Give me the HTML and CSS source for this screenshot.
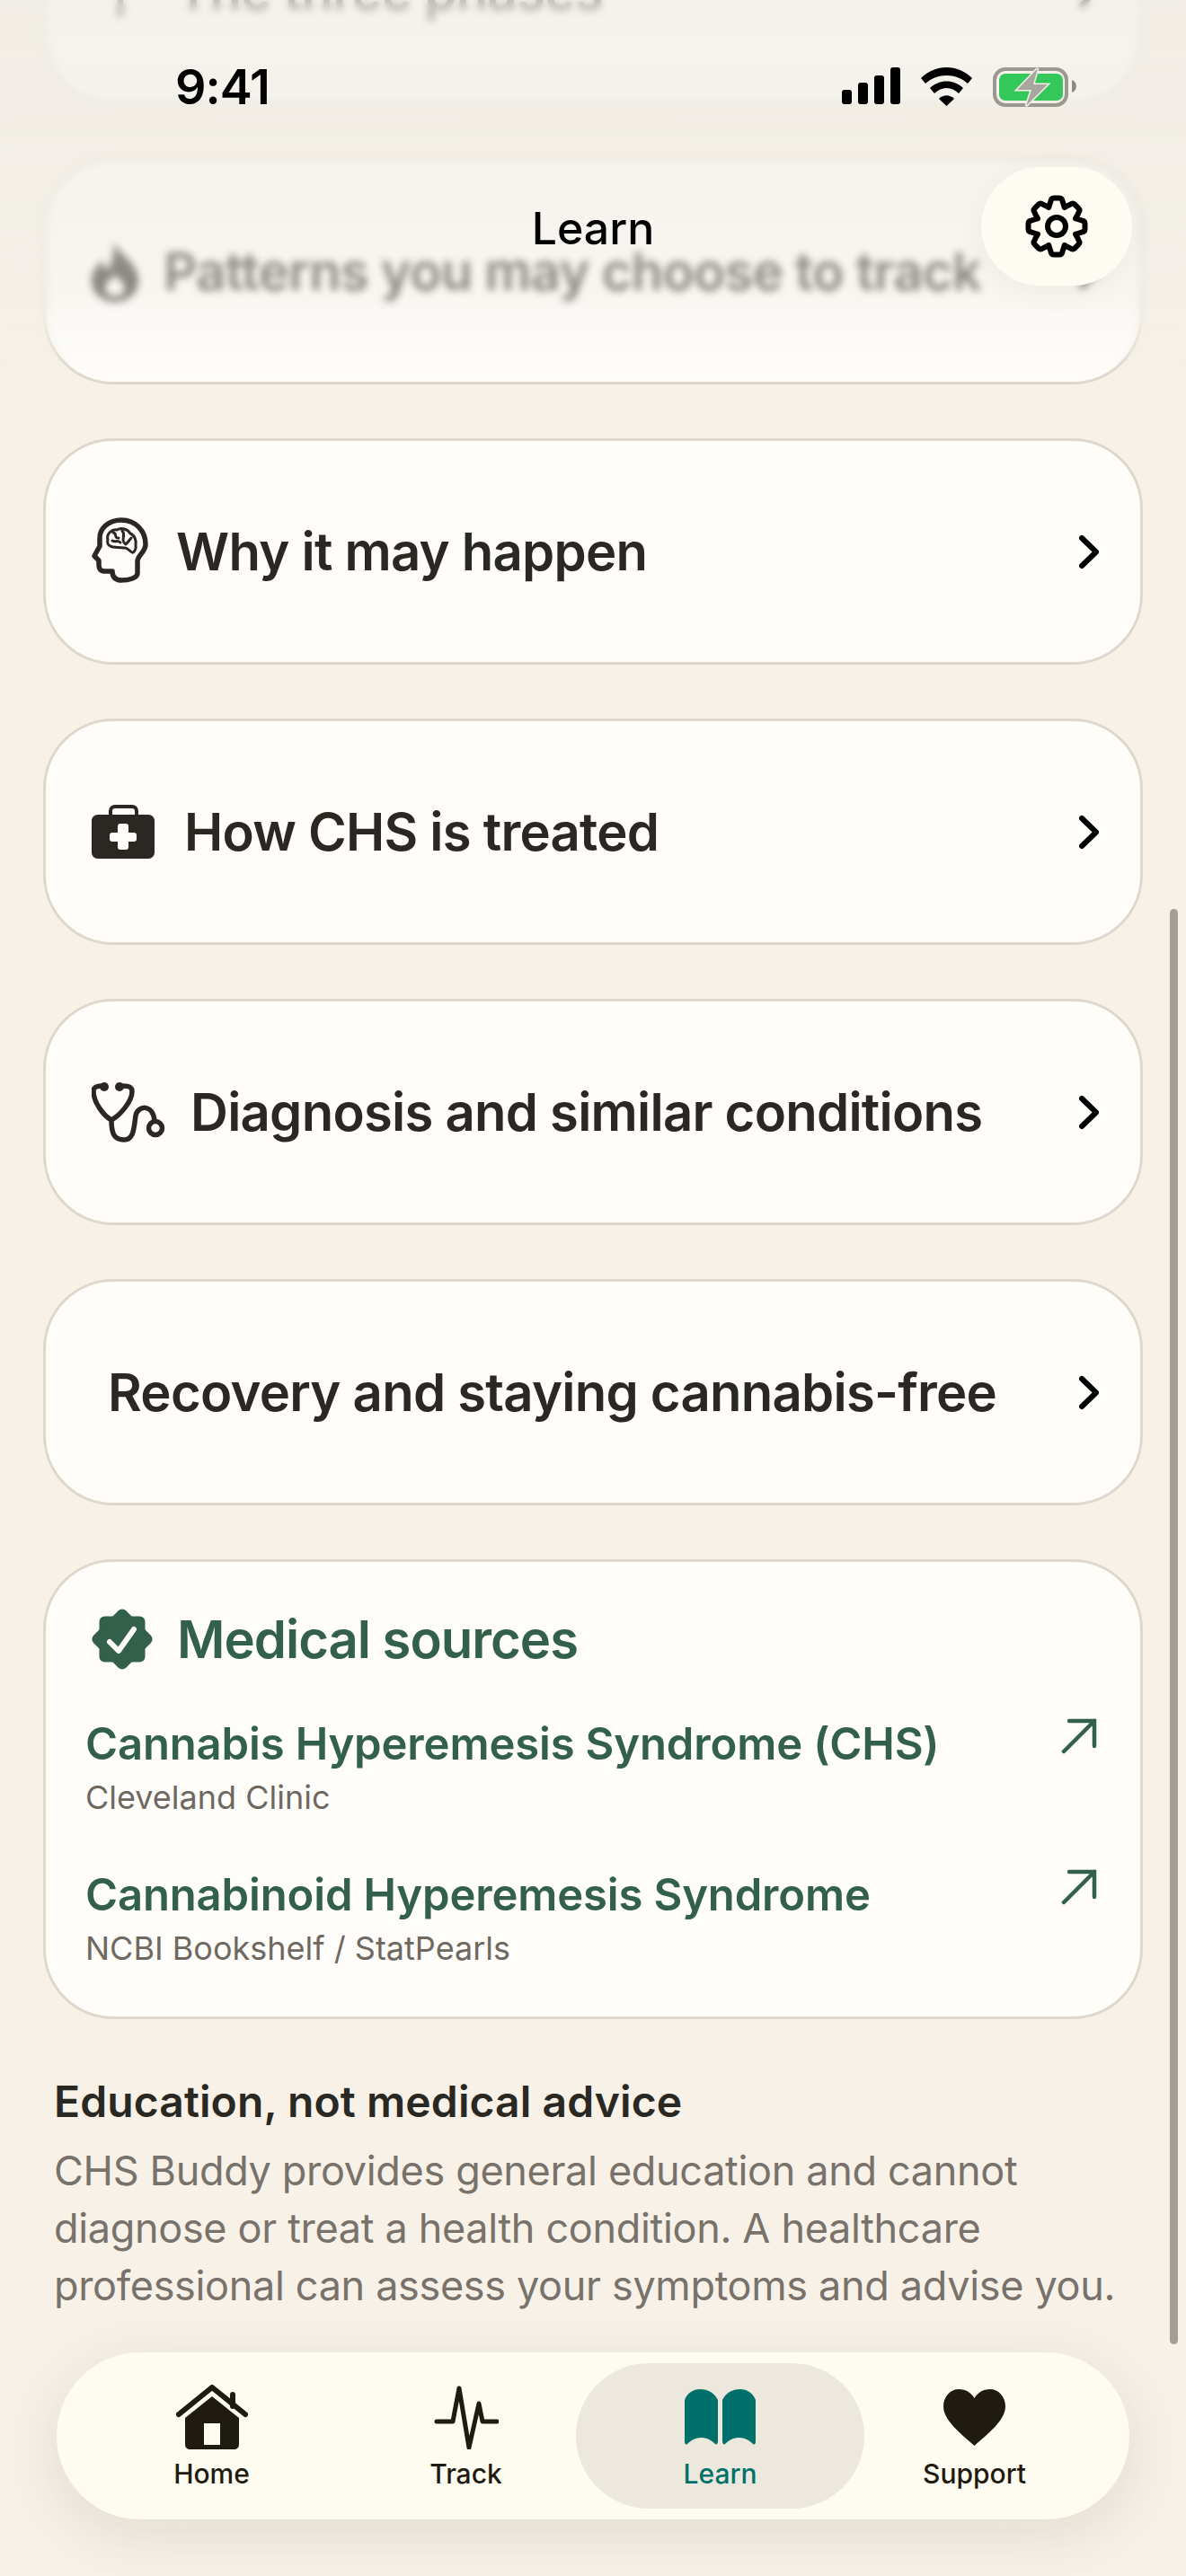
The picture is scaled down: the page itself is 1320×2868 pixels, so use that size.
FILE: index.html
```html
<!DOCTYPE html>
<html lang="en">
<head>
  <meta charset="UTF-8" />
  <meta name="viewport" content="width=device-width, initial-scale=1.0"/>
  <title>Learn - CHS Buddy</title>
  <link rel="stylesheet" href="styles.css">
</head>
<body>
  <div class="screen">
    <main class="content">
      <a class="row-card">
        <span class="row-icon slot-phases">
          <svg width="20" height="60" viewBox="0 0 20 60"><path d="M10 4V56" class="line-6"/></svg>
        </span>
        <span class="row-title">The three phases</span>
        <svg class="chevron" width="24" height="39" viewBox="0 0 24 39"><path d="M4 4L20 19.500L4 35"/></svg>
      </a>

      <a class="row-card">
        <span class="row-icon slot-flame">
          <svg width="52" height="68" viewBox="0 0 52 68"><path class="ink" fill-rule="evenodd" d="M24 0C27 12 52 24 52 44C52 58 40 68 26 68C12 68 0 58 0 44C0 34 6 28 12 22C13 28 15 31 19 32C23 22 26 12 24 0ZM26 38C20 44 15 47 15 53C15 59 20 62 26 62C32 62 37 59 37 53C37 47 31 44 26 38Z"/></svg>
        </span>
        <span class="row-title">Patterns you may choose to track</span>
        <svg class="chevron" width="24" height="39" viewBox="0 0 24 39"><path d="M4 4L20 19.500L4 35"/></svg>
      </a>

      <a class="row-card">
        <span class="row-icon slot-brain">
          <svg width="70" height="80" viewBox="40 35 70 80">
            <path class="line-5" d="M93 86V99C93 105 83 107 75 107C69 107 65 104 65 97H56C52 97 50 94 50 90V85L45 80L51 69V60C51 49 61 40 75 40C91 40 102 52 102 67C102 76 93 79 93 86Z"/>
            <path class="line-2" d="M60 62C58 55 65 50 70 51C75 48 82 50 85 55C90 57 92 63 91 68C92 72 89 77 87 76C83 74 82 70 78 71C72 70 66 71 63 69C60 68 59 65 60 62ZM66 54C71 55 66 60 72 60M76 52C81 57 73 62 80 67M86 60L81 66M65 63C68 65 71 62 74 65"/>
          </svg>
        </span>
        <span class="row-title">Why it may happen</span>
        <svg class="chevron" width="24" height="39" viewBox="0 0 24 39"><path d="M4 4L20 19.500L4 35"/></svg>
      </a>

      <a class="row-card">
        <span class="row-icon slot-kit">
          <svg width="70" height="60" viewBox="0 0 70 60">
            <path class="line-4" d="M21 12V7C21 4 23 2 26 2H45C48 2 50 4 50 7V12"/>
            <path class="ink" fill-rule="evenodd" d="M7 11H63C67 11 70 14 70 18V53C70 57 67 60 63 60H7C3 60 0 57 0 53V18C0 14 3 11 7 11ZM29 24V31H23C21 31 20 32 20 34V38C20 40 21 41 23 41H29V47C29 49 30 50 32 50H38C40 50 41 49 41 47V41H47C49 41 50 40 50 38V34C50 32 49 31 47 31H41V24C41 22 40 21 38 21H32C30 21 29 22 29 24Z"/>
          </svg>
        </span>
        <span class="row-title">How CHS is treated</span>
        <svg class="chevron" width="24" height="39" viewBox="0 0 24 39"><path d="M4 4L20 19.500L4 35"/></svg>
      </a>

      <a class="row-card">
        <span class="row-icon slot-steth">
          <svg width="82" height="68" viewBox="0 0 82 68">
            <path class="line-5" d="M12 5C6 5 2 6 2 11C2 23 13 38 22 43C31 38 45 23 45 11C45 6 41 5 35 5M22 43C22 58 25 65 36 65C47 65 47 52 49 38C51 27 68 24 70 44"/>
            <circle class="ink" cx="14" cy="6" r="5"/>
            <circle class="ink" cx="31" cy="6" r="5"/>
            <circle class="line-5" cx="71" cy="52" r="7.5"/>
          </svg>
        </span>
        <span class="row-title">Diagnosis and similar conditions</span>
        <svg class="chevron" width="24" height="39" viewBox="0 0 24 39"><path d="M4 4L20 19.500L4 35"/></svg>
      </a>

      <a class="row-card">
        <span class="row-icon slot-none"></span>
        <span class="row-title">Recovery and staying cannabis-free</span>
        <svg class="chevron" width="24" height="39" viewBox="0 0 24 39"><path d="M4 4L20 19.500L4 35"/></svg>
      </a>

      <section class="sources-card">
        <div class="sources-head">
          <svg width="68" height="68" viewBox="0 0 68 68">
            <rect class="green" x="8.5" y="8.5" width="51" height="51" rx="6"/>
            <rect class="green" x="8.5" y="8.5" width="51" height="51" rx="6" transform="rotate(45 34 34)"/>
            <path class="check" d="M20 37L30 47L47 23"/>
          </svg>
          <h2>Medical sources</h2>
        </div>
        <a class="source-link">
          <div>
            <div class="source-title">Cannabis Hyperemesis Syndrome (CHS)</div>
            <div class="source-by">Cleveland Clinic</div>
          </div>
          <svg class="out-arrow" width="40" height="40" viewBox="0 0 40 40"><path d="M3 37L37 3M9 3H37V31"/></svg>
        </a>
        <a class="source-link">
          <div>
            <div class="source-title">Cannabinoid Hyperemesis Syndrome</div>
            <div class="source-by">NCBI Bookshelf / StatPearls</div>
          </div>
          <svg class="out-arrow" width="40" height="40" viewBox="0 0 40 40"><path d="M3 37L37 3M9 3H37V31"/></svg>
        </a>
      </section>

      <section class="note">
        <h3>Education, not medical advice</h3>
        <p>CHS Buddy provides general education and cannot diagnose or treat a health condition. A healthcare professional can assess your symptoms and advise you.</p>
      </section>
    </main>

    <div class="scrollbar"></div>

    <header class="top-bar">
      <div class="top-blur"></div>
      <div class="status-bar">
        <span class="clock">9:41</span>
        <div class="status-icons">
          <svg width="65" height="41" viewBox="0 0 65 41">
            <rect x="0" y="25" width="11" height="16" rx="3"/>
            <rect x="18" y="17" width="11" height="24" rx="3"/>
            <rect x="36" y="9" width="11" height="32" rx="3"/>
            <rect x="54" y="0" width="11" height="41" rx="3"/>
          </svg>
          <svg width="57" height="43" viewBox="0 0 57 43">
            <path d="M0 12C16 -4 41 -4 57 12L52 18C39 6 18 6 5 18Z"/>
            <path d="M10 23C20 13 37 13 47 23L42 29C34 21 23 21 15 29Z"/>
            <path d="M20 35C25 30 32 30 37 35L28.500 43Z"/>
          </svg>
          <svg class="battery" width="93" height="44" viewBox="0 0 93 44">
            <rect class="batt-case" x="2" y="2" width="80" height="40" rx="12"/>
            <rect class="batt-level" x="7" y="7" width="71" height="30" rx="7"/>
            <path class="batt-tip" d="M88 14C91 15 93 18 93 21C93 24 91 27 88 28Z"/>
            <path class="batt-bolt" d="M50 1L27 25H43L37 43L61 19H45Z"/>
          </svg>
        </div>
      </div>
      <h1 class="page-title">Learn</h1>
      <button class="settings-btn">
        <svg width="70" height="70" viewBox="-35 -35 70 70">
          <g class="gear">
            <path d="M-8.800 -21.200L-6.500 -28Q-6 -31.500 -3 -31.500H3Q6 -31.500 6.500 -28L8.800 -21.200"/>
            <path transform="rotate(45)" d="M-8.800 -21.200L-6.500 -28Q-6 -31.500 -3 -31.500H3Q6 -31.500 6.500 -28L8.800 -21.200"/>
            <path transform="rotate(90)" d="M-8.800 -21.200L-6.500 -28Q-6 -31.500 -3 -31.500H3Q6 -31.500 6.500 -28L8.800 -21.200"/>
            <path transform="rotate(135)" d="M-8.800 -21.200L-6.500 -28Q-6 -31.500 -3 -31.500H3Q6 -31.500 6.500 -28L8.800 -21.200"/>
            <path transform="rotate(180)" d="M-8.800 -21.200L-6.500 -28Q-6 -31.500 -3 -31.500H3Q6 -31.500 6.500 -28L8.800 -21.200"/>
            <path transform="rotate(225)" d="M-8.800 -21.200L-6.500 -28Q-6 -31.500 -3 -31.500H3Q6 -31.500 6.500 -28L8.800 -21.200"/>
            <path transform="rotate(270)" d="M-8.800 -21.200L-6.500 -28Q-6 -31.500 -3 -31.500H3Q6 -31.500 6.500 -28L8.800 -21.200"/>
            <path transform="rotate(315)" d="M-8.800 -21.200L-6.500 -28Q-6 -31.500 -3 -31.500H3Q6 -31.500 6.500 -28L8.800 -21.200"/>
            <circle r="10"/>
          </g>
        </svg>
      </button>
    </header>

    <nav class="tab-bar">
      <a class="tab">
        <svg width="82" height="72" viewBox="0 0 82 72">
          <path class="tab-roof" d="M4 33L41 3L78 33M64 24V11"/>
          <path class="tab-fill" fill-rule="evenodd" d="M41 13L71 37V66C71 70 69 72 65 72H17C13 72 11 70 11 66V37ZM32 43V67H50V43Z"/>
        </svg>
        <span>Home</span>
      </a>
      <a class="tab">
        <svg width="72" height="72" viewBox="0 0 72 72">
          <path class="tab-pulse" d="M3 41H21L28 4L39 70L50 21L54 41H70"/>
        </svg>
        <span>Track</span>
      </a>
      <a class="tab active">
        <svg width="79" height="72" viewBox="0 0 79 72">
          <path class="tab-book" d="M0 17C3 9 10 5 17 5C26 5 33 9 37 17V63C37 66 35 67 34 66C28 60 23 59 18 59C12 59 7 62 3 66C2 67 0 67 0 63Z"/>
          <path class="tab-book" d="M79 17C76 9 69 5 62 5C53 5 46 9 42 17V63C42 66 44 67 45 66C51 60 56 59 61 59C67 59 72 62 76 66C77 67 79 67 79 63Z"/>
        </svg>
        <span>Learn</span>
      </a>
      <a class="tab">
        <svg width="69" height="72" viewBox="0 0 69 72">
          <path class="tab-fill" d="M34.500 68C20 55 0 40 0 24C0 13 8 5 17 5C25 5 31 9 34.500 15C38 9 44 5 52 5C61 5 69 13 69 24C69 40 49 55 34.500 68Z"/>
        </svg>
        <span>Support</span>
      </a>
    </nav>
  </div>
</body>
</html>
```

FILE: styles.css
```css
* {
  box-sizing: border-box;
}

body {
  margin: 0;
  background: #f7f1e8;
  font-family: Inter, 'Noto Sans', sans-serif;
  color: #2a2822;
}

svg {
  display: block;
}

h1, h2, h3, p {
  margin: 0;
}

.screen {
  position: relative;
  width: 1320px;
  height: 2868px;
  overflow: hidden;
  background: #f7f1e8;
}

.content {
  display: flex;
  flex-direction: column;
  gap: 60px;
  margin-top: -136px;
  padding: 0 48px;
}

/* list cards */
.row-card {
  display: flex;
  align-items: center;
  height: 252px;
  padding: 0 45px 0 51px;
  background: #fefdfa;
  border: 3px solid #ddd8cb;
  border-radius: 78px;
}

.row-icon {
  flex: none;
  display: flex;
  align-items: center;
}

.slot-phases { width: 94px; padding-left: 22px; }
.slot-flame { width: 80px; }
.slot-brain { width: 96px; margin-left: -2px; }
.slot-kit { width: 103px; }
.slot-steth { width: 110px; }
.slot-none { width: 18px; }

.row-title {
  flex: 1;
  font-size: 58px;
  font-weight: 560;
  letter-spacing: -0.75px;
  white-space: nowrap;
}

.chevron {
  flex: none;
}

.chevron path {
  fill: none;
  stroke: #000;
  stroke-width: 6;
  stroke-linecap: round;
  stroke-linejoin: round;
}

/* shared icon paints */
.ink { fill: #2a2822; }
.green { fill: #33604a; }

.line-2, .line-4, .line-5, .line-6 {
  fill: none;
  stroke: #2a2822;
  stroke-linecap: round;
  stroke-linejoin: round;
}

.line-2 { stroke-width: 3; }
.line-4 { stroke-width: 4; }
.line-5 { stroke-width: 5.5; }
.line-6 { stroke-width: 6; }

/* sources */
.sources-card {
  height: 512px;
  padding: 50px 48px 0 44px;
  background: #fefdfa;
  border: 3px solid #ddd8cb;
  border-radius: 78px;
}

.sources-head {
  display: flex;
  align-items: center;
  gap: 27px;
  height: 72px;
  margin-left: 7px;
  margin-bottom: 51px;
}

.sources-head h2 {
  font-size: 58px;
  font-weight: 560;
  letter-spacing: -1px;
  color: #33604a;
}

.check {
  fill: none;
  stroke: #fefdfa;
  stroke-width: 6;
  stroke-linecap: round;
  stroke-linejoin: round;
}

.source-link {
  display: flex;
  justify-content: space-between;
  align-items: flex-start;
  height: 113px;
  margin-bottom: 55px;
}

.source-title {
  font-size: 49px;
  line-height: 60px;
  font-weight: 560;
  letter-spacing: -0.15px;
  color: #33604a;
  white-space: nowrap;
}

.source-by {
  margin-top: 7px;
  font-size: 36px;
  line-height: 44px;
  color: #6f6860;
}

.out-arrow {
  margin-top: 1px;
}

.out-arrow path {
  fill: none;
  stroke: #33604a;
  stroke-width: 4.5;
  stroke-linecap: round;
}

/* disclaimer */
.note {
  padding: 2px 12px 0;
}

.note h3 {
  font-size: 48px;
  line-height: 60px;
  font-weight: 600;
  letter-spacing: 0.1px;
  color: #2a2822;
}

.note p {
  margin-top: 15px;
  font-size: 45px;
  line-height: 64px;
  letter-spacing: -0.33px;
  color: #78726a;
}

/* overlays */
.scrollbar {
  position: absolute;
  top: 1012px;
  left: 1302px;
  width: 9px;
  height: 1598px;
  border-radius: 5px;
  background: #a19f96;
}

.top-bar {
  position: absolute;
  top: 0;
  left: 0;
  width: 100%;
  height: 430px;
}

.top-blur {
  position: absolute;
  inset: 0;
  background: linear-gradient(rgba(240, 237, 230, 0.72), rgba(240, 237, 230, 0.5) 70%, rgba(247, 244, 238, 0.3));
  -webkit-backdrop-filter: blur(4px);
  backdrop-filter: blur(4px);
  -webkit-mask-image: linear-gradient(#000 78%, transparent 97%);
  mask-image: linear-gradient(#000 78%, transparent 97%);
}

.status-bar {
  position: absolute;
  top: 64px;
  left: 195px;
  right: 122px;
  display: flex;
  justify-content: space-between;
  align-items: flex-start;
}

.clock {
  font-size: 54px;
  line-height: 65px;
  font-weight: 600;
  letter-spacing: -1px;
  color: #000;
}

.status-icons {
  display: flex;
  gap: 23px;
  margin-top: 11px;
}

.batt-case {
  fill: none;
  stroke: #9b9890;
  stroke-width: 4;
}

.batt-level { fill: #34c759; }
.batt-tip { fill: #8f8c85; }

.batt-bolt {
  fill: #a9a69e;
  stroke: #f2eee8;
  stroke-width: 3;
  paint-order: stroke;
}

.page-title {
  position: absolute;
  top: 223px;
  left: 0;
  width: 100%;
  text-align: center;
  font-size: 50px;
  line-height: 62px;
  font-weight: 500;
  color: #000;
}

.settings-btn {
  position: absolute;
  top: 186px;
  left: 1092px;
  width: 168px;
  height: 132px;
  display: flex;
  align-items: center;
  justify-content: center;
  padding: 0;
  border: none;
  border-radius: 66px;
  background: #fefbf3;
  box-shadow: 0 6px 30px rgba(90, 75, 50, 0.06);
}

.gear path, .gear circle {
  fill: none;
  stroke: #000;
  stroke-width: 6;
  stroke-linecap: round;
  stroke-linejoin: round;
}

/* tab bar */
.tab-bar {
  position: absolute;
  top: 2619px;
  left: 63px;
  width: 1194px;
  height: 186px;
  display: grid;
  grid-template-columns: repeat(4, 283px);
  padding: 12px 31px;
  background: #fefbf1;
  border-radius: 93px;
  box-shadow: 0 16px 70px rgba(90, 70, 40, 0.13);
}

.tab {
  display: flex;
  flex-direction: column;
  align-items: center;
  padding-top: 24px;
  font-size: 30px;
  line-height: 38px;
  font-weight: 500;
  color: #1f1b10;
}

.tab span {
  margin-top: 8px;
}

.tab.active {
  margin: 0 -19px;
  background: #ece8de;
  border-radius: 81px;
  color: #00706a;
}

.tab-fill { fill: #1f1b10; }
.tab-book { fill: #00706a; }

.tab-roof, .tab-pulse {
  fill: none;
  stroke: #1f1b10;
  stroke-linecap: round;
  stroke-linejoin: round;
}

.tab-roof { stroke-width: 6; }
.tab-pulse { stroke-width: 5; }
```
